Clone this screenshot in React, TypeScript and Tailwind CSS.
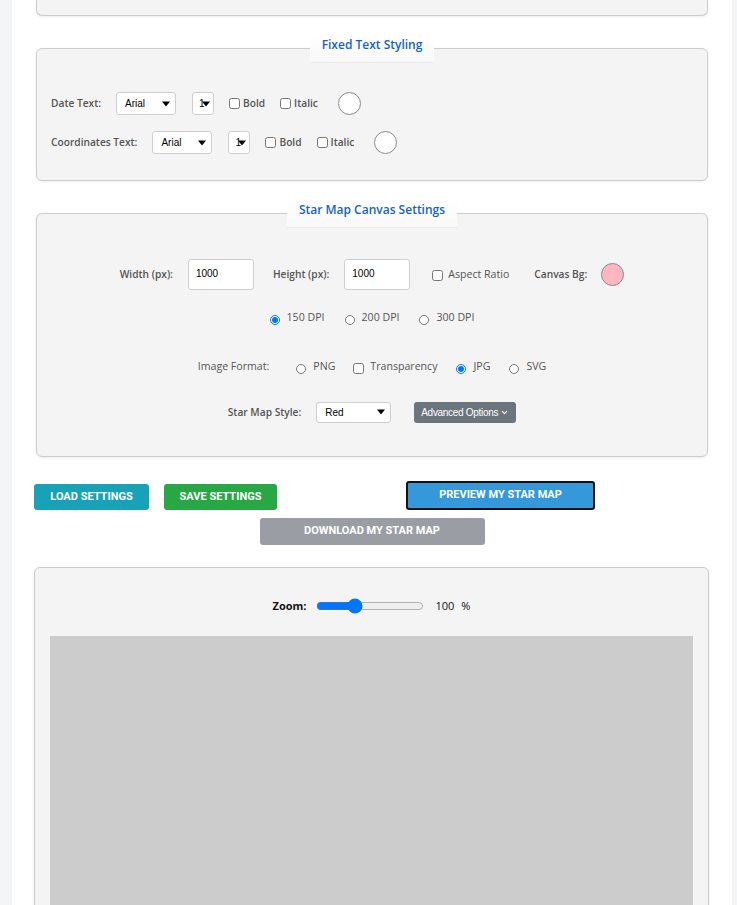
import React from 'react';

const label = "font-['Open_Sans',sans-serif] text-[10.2px] font-semibold text-[#555]";
const plain = "font-['Open_Sans',sans-serif] text-[10.6px] text-[#555]";
const btn = "rounded-[3px] font-['Roboto',sans-serif] text-[11px] font-bold uppercase text-white";

function Caret() {
  return (
    <span className="pointer-events-none absolute right-[5px] top-1/2 -translate-y-1/2 border-x-[4px] border-t-[5px] border-x-transparent border-t-black" />
  );
}

function FakeSelect({ value, w, h }: { value: string; w: string; h: string }) {
  return (
    <div className={`relative flex items-center rounded-[3px] border border-[#cfcfcf] bg-white pl-[8px] font-['Liberation_Sans',Arial,sans-serif] text-[10px] text-black ${w} ${h}`}>
      {value}
      <Caret />
    </div>
  );
}

function SizeSelect() {
  return (
    <div className="relative flex h-[23px] w-[22px] items-center rounded-[3px] border border-[#cfcfcf] bg-white pl-[6px] font-['Liberation_Sans',Arial,sans-serif] text-[10px] text-black">
      1
      <span className="pointer-events-none absolute right-[3px] top-1/2 -translate-y-1/2 border-x-[4px] border-t-[5px] border-x-transparent border-t-black" />
    </div>
  );
}

function Check({ text, className = '' }: { text: string; className?: string }) {
  return (
    <label className={`flex items-center gap-[3px] ${className}`}>
      <input type="checkbox" className="m-0 h-[11px] w-[11px]" />
      <span className={label}>{text}</span>
    </label>
  );
}

function Radio({ text, checked = false, className = '' }: { text: string; checked?: boolean; className?: string }) {
  return (
    <label className={`flex items-center gap-[7px] ${className}`}>
      <input type="radio" name={text.includes('DPI') ? 'dpi' : 'fmt'} defaultChecked={checked} className="m-0 mt-[4px] h-[10px] w-[10px]" />
      <span className={plain}>{text}</span>
    </label>
  );
}

function Swatch({ color = 'bg-white', className = '' }: { color?: string; className?: string }) {
  return <div className={`h-[23px] w-[23px] rounded-full border border-[#8a8a8a] ${color} ${className}`} />;
}

function Legend({ children }: { children: React.ReactNode }) {
  return (
    <legend className="mx-auto border-b border-[#ececec] bg-gradient-to-b from-white to-[#f8f8f8] px-[12px] pb-[9px] pt-[3px] font-['Open_Sans',sans-serif] text-[12px] font-semibold leading-[16px] text-[#1565c0]">
      {children}
    </legend>
  );
}

function TextRow({ name }: { name: string }) {
  return (
    <div className="flex items-center">
      <span className={label}>{name}</span>
      <FakeSelect value="Arial" w="w-[60px] ml-[15px]" h="h-[23px]" />
      <div className="ml-[16px]">
        <SizeSelect />
      </div>
      <Check text="Bold" className="ml-[15px]" />
      <Check text="Italic" className="ml-[15px]" />
      <Swatch className="ml-[20px]" />
    </div>
  );
}

export default function App() {
  return (
    <div className="min-h-screen bg-[#f4f5f7]">
      <div className="ml-[12px] min-h-[905px] w-[720px] overflow-hidden bg-white pb-[40px]">
        <div className="mx-[24px] h-[16px] rounded-b-[6px] border-x border-b border-[#cccccc] bg-[#f4f4f4] shadow-[0_1px_3px_rgba(0,0,0,0.08)]" />

        <fieldset className="mx-[24px] mt-[18px] rounded-[6px] border border-[#cccccc] bg-[#f4f4f4] px-[14px] pb-[26px] pt-[29px] shadow-[0_1px_3px_rgba(0,0,0,0.08)]">
          <Legend>Fixed Text Styling</Legend>
          <div className="flex flex-col gap-[16px]">
            <TextRow name="Date Text:" />
            <TextRow name="Coordinates Text:" />
          </div>
        </fieldset>

        <fieldset className="mx-[24px] mt-[18px] rounded-[6px] border border-[#cccccc] bg-[#f4f4f4] pb-[33px] pt-[31px] shadow-[0_1px_3px_rgba(0,0,0,0.08)]">
          <Legend>Star Map Canvas Settings</Legend>
          <div className="flex items-center justify-center">
            <span className={label}>Width (px):</span>
            <input defaultValue="1000" className="ml-[15px] h-[31px] w-[66px] rounded-[3px] border border-[#cfcfcf] bg-white pb-[3px] pl-[7px] font-['Liberation_Sans',Arial,sans-serif] text-[10px] text-black" />
            <span className={`${label} ml-[19px]`}>Height (px):</span>
            <input defaultValue="1000" className="ml-[15px] h-[31px] w-[66px] rounded-[3px] border border-[#cfcfcf] bg-white pb-[3px] pl-[7px] font-['Liberation_Sans',Arial,sans-serif] text-[10px] text-black" />
            <label className="ml-[22px] flex items-center gap-[5px]">
              <input type="checkbox" className="m-0 mt-[3px] h-[11px] w-[11px]" />
              <span className={plain}>Aspect Ratio</span>
            </label>
            <span className={`${label} ml-[25px]`}>Canvas Bg:</span>
            <Swatch color="bg-[#ffb6c1]" className="ml-[14px]" />
          </div>

          <div className="mt-[20px] flex items-center justify-center">
            <Radio text="150 DPI" checked />
            <Radio text="200 DPI" className="ml-[20px]" />
            <Radio text="300 DPI" className="ml-[20px]" />
          </div>

          <div className="mt-[33px] flex items-center justify-center">
            <span className={plain}>Image Format:</span>
            <Radio text="PNG" className="ml-[27px]" />
            <label className="ml-[18px] flex items-center gap-[6px]">
              <input type="checkbox" className="m-0 mt-[3px] h-[11px] w-[11px]" />
              <span className={plain}>Transparency</span>
            </label>
            <Radio text="JPG" checked className="ml-[19px]" />
            <Radio text="SVG" className="ml-[19px]" />
          </div>

          <div className="mt-[27px] flex items-center justify-center">
            <span className={label}>Star Map Style:</span>
            <FakeSelect value="Red" w="w-[75px] ml-[15px]" h="h-[21px]" />
            <button className="ml-[23px] flex h-[21px] w-[102px] items-center justify-center gap-[2px] rounded-[3px] bg-[#6c757d] font-['Liberation_Sans',Arial,sans-serif] text-[10px] tracking-[-0.3px] text-white">
              Advanced Options
              <svg width="9" height="9" viewBox="0 0 24 24" fill="none" stroke="white" strokeWidth="3" strokeLinecap="round" strokeLinejoin="round">
                <path d="M6 9l6 6 6-6" />
              </svg>
            </button>
          </div>
        </fieldset>

        <div className="mt-[24px] flex items-end pl-[22px]">
          <button className={`${btn} h-[26px] w-[115px] bg-[#17a2b8]`}>Load Settings</button>
          <button className={`${btn} ml-[15px] h-[26px] w-[113px] bg-[#28a745]`}>Save Settings</button>
          <button className={`${btn} ml-[129px] h-[29px] w-[189px] border-2 border-[#111] bg-[#3498db]`}>Preview My Star Map</button>
        </div>
        <div className="mt-[8px] flex justify-center">
          <button className={`${btn} h-[27px] w-[225px] bg-[#9a9ea4] text-[#f1f1f1]`}>Download My Star Map</button>
        </div>

        <div className="ml-[22px] mt-[22px] w-[675px] rounded-[6px] border border-[#cccccc] bg-[#f4f4f4] px-[15px] pt-[30px] pb-[16px] shadow-[0_1px_3px_rgba(0,0,0,0.08)]">
          <div className="flex items-center justify-center">
            <span className="font-['Open_Sans',sans-serif] text-[11px] font-bold text-[#111]">Zoom:</span>
            <input type="range" min={25} max={250} defaultValue={100} className="ml-[10px] h-[16px] w-[108px] accent-[#0075ff]" />
            <span className="ml-[11px] font-['Open_Sans',sans-serif] text-[11px] text-[#111]">100</span>
            <span className="ml-[7px] font-['Open_Sans',sans-serif] text-[11px] text-[#111]">%</span>
          </div>
          <div className="mt-[22px] h-[644px] w-full bg-[#cccccc]" />
        </div>
      </div>
    </div>
  );
}
